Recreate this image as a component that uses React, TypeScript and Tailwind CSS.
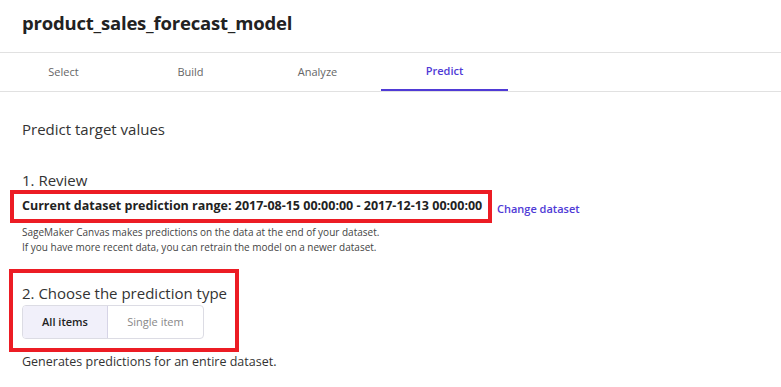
const tabs = ['Select', 'Build', 'Analyze', 'Predict'];

export default function App() {
  const active = 'Predict';

  return (
    <div className="w-[781px] h-[387px] overflow-hidden bg-white text-[#333] font-['Open_Sans',sans-serif]">
      <div className="h-[52px] px-[22px] pb-[6px] flex items-center">
        <h1 className="text-[18.5px] font-bold text-[#222] tracking-[-0.2px]">product_sales_forecast_model</h1>
      </div>

      <div className="flex border-y border-[#e1e1e1] h-[40px]">
        {tabs.map((t) => (
          <div
            key={t}
            className={
              t === active
                ? 'w-[127px] flex items-center justify-center text-[11px] font-semibold text-[#4f3ad6] border-b-2 border-[#4f3ad6]'
                : 'w-[127px] flex items-center justify-center text-[11px] font-medium text-[#666]'
            }
          >
            {t}
          </div>
        ))}
      </div>

      <div className="px-[22px] pt-[27px]">
        <h2 className="text-[15px] text-[#333] leading-[20px]">Predict target values</h2>

        <h3 className="mt-[31px] text-[15px] text-[#333] leading-[20px]">1. Review</h3>
        <div className="flex items-center">
          <div className="-ml-[12px] border-4 border-[#ec1c24] h-[33px] w-[482px] flex items-center pl-[8px]">
            <span className="text-[12.5px] font-bold text-[#222] whitespace-nowrap">
              Current dataset prediction range: 2017-08-15 00:00:00 - 2017-12-13 00:00:00
            </span>
          </div>
          <a className="ml-[5px] mt-[6px] text-[11px] font-semibold text-[#4f3ad6]">Change dataset</a>
        </div>
        <p className="mt-[2px] text-[10px] leading-[15px] text-[#444]">
          SageMaker Canvas makes predictions on the data at the end of your dataset.
          <br />
          If you have more recent data, you can retrain the model on a newer dataset.
        </p>

        <div className="-ml-[13px] mt-[14px] w-[230px] h-[83px] border-4 border-[#ec1c24] pl-[9px] pt-[10px]">
          <h3 className="text-[15px] leading-[20px] text-[#333] whitespace-nowrap">2. Choose the prediction type</h3>
          <div className="mt-[2px] flex w-[182px] h-[34px] rounded-[4px] border border-[#dcdce4] overflow-hidden">
            <div className="w-[85px] bg-[#f1f0fa] border-r border-[#d6d4e6] flex items-center justify-center text-[11px] font-semibold text-[#222]">
              All items
            </div>
            <div className="flex-1 flex items-center justify-center text-[11px] text-[#888]">Single item</div>
          </div>
        </div>

        <p className="mt-[1px] text-[12.5px] text-[#333]">Generates predictions for an entire dataset.</p>
      </div>
    </div>
  );
}
